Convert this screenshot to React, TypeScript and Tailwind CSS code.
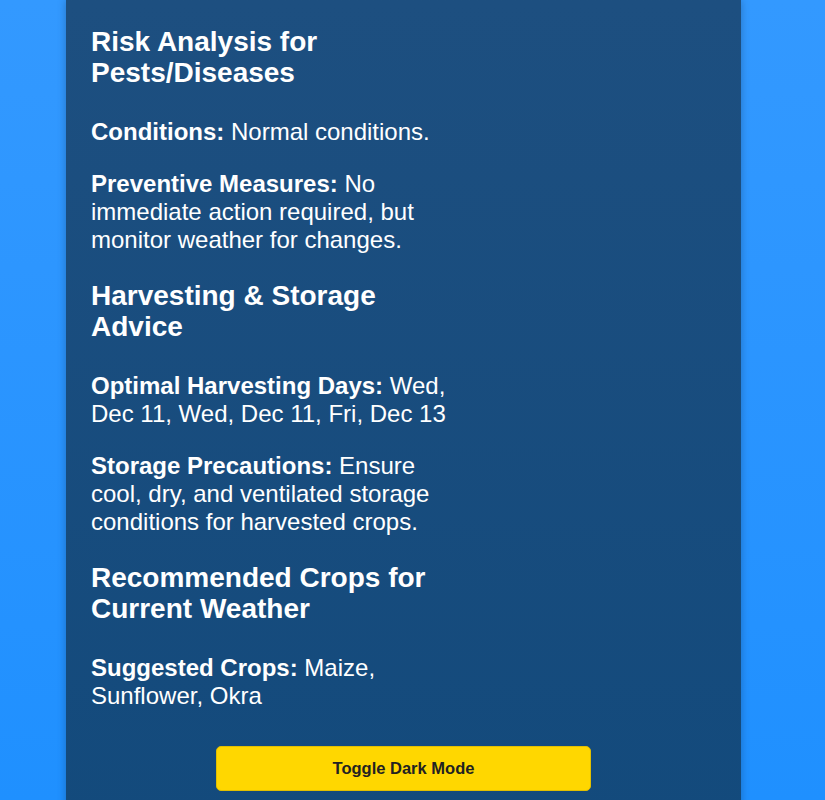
export default function App() {
  const sections = [
    {
      title: "Risk Analysis for Pests/Diseases",
      items: [
        { label: "Conditions:", text: "Normal conditions." },
        {
          label: "Preventive Measures:",
          text: "No immediate action required, but monitor weather for changes.",
        },
      ],
    },
    {
      title: "Harvesting & Storage Advice",
      items: [
        {
          label: "Optimal Harvesting Days:",
          text: "Wed, Dec 11, Wed, Dec 11, Fri, Dec 13",
        },
        {
          label: "Storage Precautions:",
          text: "Ensure cool, dry, and ventilated storage conditions for harvested crops.",
        },
      ],
    },
    {
      title: "Recommended Crops for Current Weather",
      items: [{ label: "Suggested Crops:", text: "Maize, Sunflower, Okra" }],
    },
  ];

  return (
    <main
      className="h-[800px] overflow-hidden bg-gradient-to-b from-[#3399ff] to-[#1f90ff] text-white"
      style={{ fontFamily: '"Liberation Sans", Arial, sans-serif' }}
    >
      <div className="ml-[66px] w-[675px] min-h-[830px] bg-gradient-to-b from-[#1d4f80] to-[#134a7c] px-[25px] pt-[26px] pb-[25px] shadow-[0_0_8px_rgba(0,0,0,0.25)]">
        <div className="w-[368px]">
          {sections.map((s, i) => (
            <section key={s.title} className={i > 0 ? "mt-[26px]" : ""}>
              <h2 className="text-[28px] font-bold leading-[31px]">{s.title}</h2>
              {s.items.map((it, j) => (
                <p
                  key={it.label}
                  className={
                    "text-[24px] leading-[28px] " +
                    (j === 0 ? "mt-[30px]" : "mt-[24px]")
                  }
                >
                  <strong className="font-bold">{it.label}</strong> {it.text}
                </p>
              ))}
            </section>
          ))}
        </div>

        <div className="mt-[36px] flex justify-center">
          <button
            type="button"
            className="h-[45px] w-[375px] rounded-[5px] border border-[#e2bf00] bg-[#ffd700] text-[16.5px] font-bold text-[#222222]"
          >
            Toggle Dark Mode
          </button>
        </div>
      </div>
    </main>
  );
}
